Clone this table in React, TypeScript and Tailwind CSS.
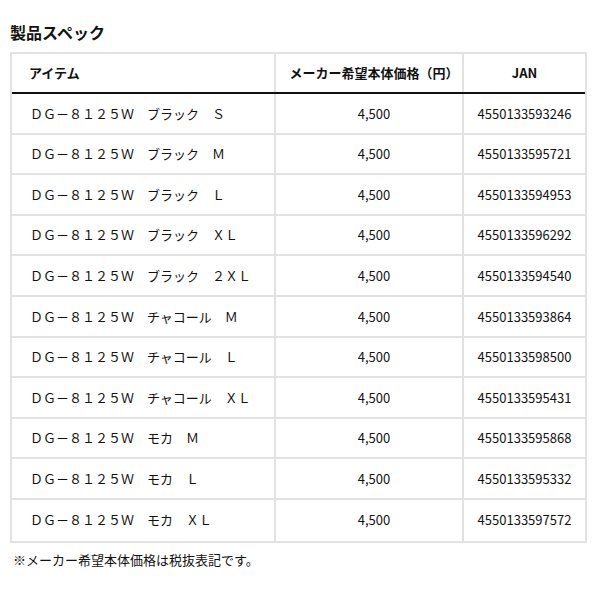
const rows = [
  { item: "ＤＧ－８１２５Ｗ　ブラック　Ｓ", jan: "4550133593246" },
  { item: "ＤＧ－８１２５Ｗ　ブラック　Ｍ", jan: "4550133595721" },
  { item: "ＤＧ－８１２５Ｗ　ブラック　Ｌ", jan: "4550133594953" },
  { item: "ＤＧ－８１２５Ｗ　ブラック　ＸＬ", jan: "4550133596292" },
  { item: "ＤＧ－８１２５Ｗ　ブラック　２ＸＬ", jan: "4550133594540" },
  { item: "ＤＧ－８１２５Ｗ　チャコール　Ｍ", jan: "4550133593864" },
  { item: "ＤＧ－８１２５Ｗ　チャコール　Ｌ", jan: "4550133598500" },
  { item: "ＤＧ－８１２５Ｗ　チャコール　ＸＬ", jan: "4550133595431" },
  { item: "ＤＧ－８１２５Ｗ　モカ　Ｍ", jan: "4550133595868" },
  { item: "ＤＧ－８１２５Ｗ　モカ　Ｌ", jan: "4550133595332" },
  { item: "ＤＧ－８１２５Ｗ　モカ　ＸＬ", jan: "4550133597572" },
]

export default function App() {
  return (
    <div
      className="w-[600px] h-[600px] bg-white text-[#111] px-[10px] pt-[22px]"
      style={{ fontFamily: '"Noto Sans CJK JP", "Noto Sans", sans-serif' }}
    >
      <h2 className="text-[16px] font-bold leading-[20px] mb-[10px]">製品スペック</h2>

      <div className="w-[577px] border-2 border-[#e2e2e2]">
        {/* header */}
        <div className="grid grid-cols-[264px_188px_121px] h-[40px] border-b-2 border-[#111] text-[13px] font-bold">
          <div className="flex items-center pl-[17px] border-r-2 border-[#e2e2e2]">アイテム</div>
          <div className="flex items-center justify-center pl-[10px] border-r-2 border-[#e2e2e2]">メーカー希望本体価格（円）</div>
          <div className="flex items-center justify-center">JAN</div>
        </div>

        {rows.map((r, i) => (
          <div
            key={i}
            className={`grid grid-cols-[264px_188px_121px] h-[40.6px] text-[13px] ${
              i < rows.length - 1 ? "border-b-2 border-[#e2e2e2]" : ""
            }`}
          >
            <div className="flex items-center pl-[18px] border-r-2 border-[#e2e2e2] whitespace-nowrap">{r.item}</div>
            <div className="flex items-center justify-center pl-[10px] border-r-2 border-[#e2e2e2]">4,500</div>
            <div className="flex items-center justify-center">{r.jan}</div>
          </div>
        ))}
      </div>

      <p className="text-[13px] leading-[18px] mt-[8px] pl-[3px]">※メーカー希望本体価格は税抜表記です。</p>
    </div>
  )
}
